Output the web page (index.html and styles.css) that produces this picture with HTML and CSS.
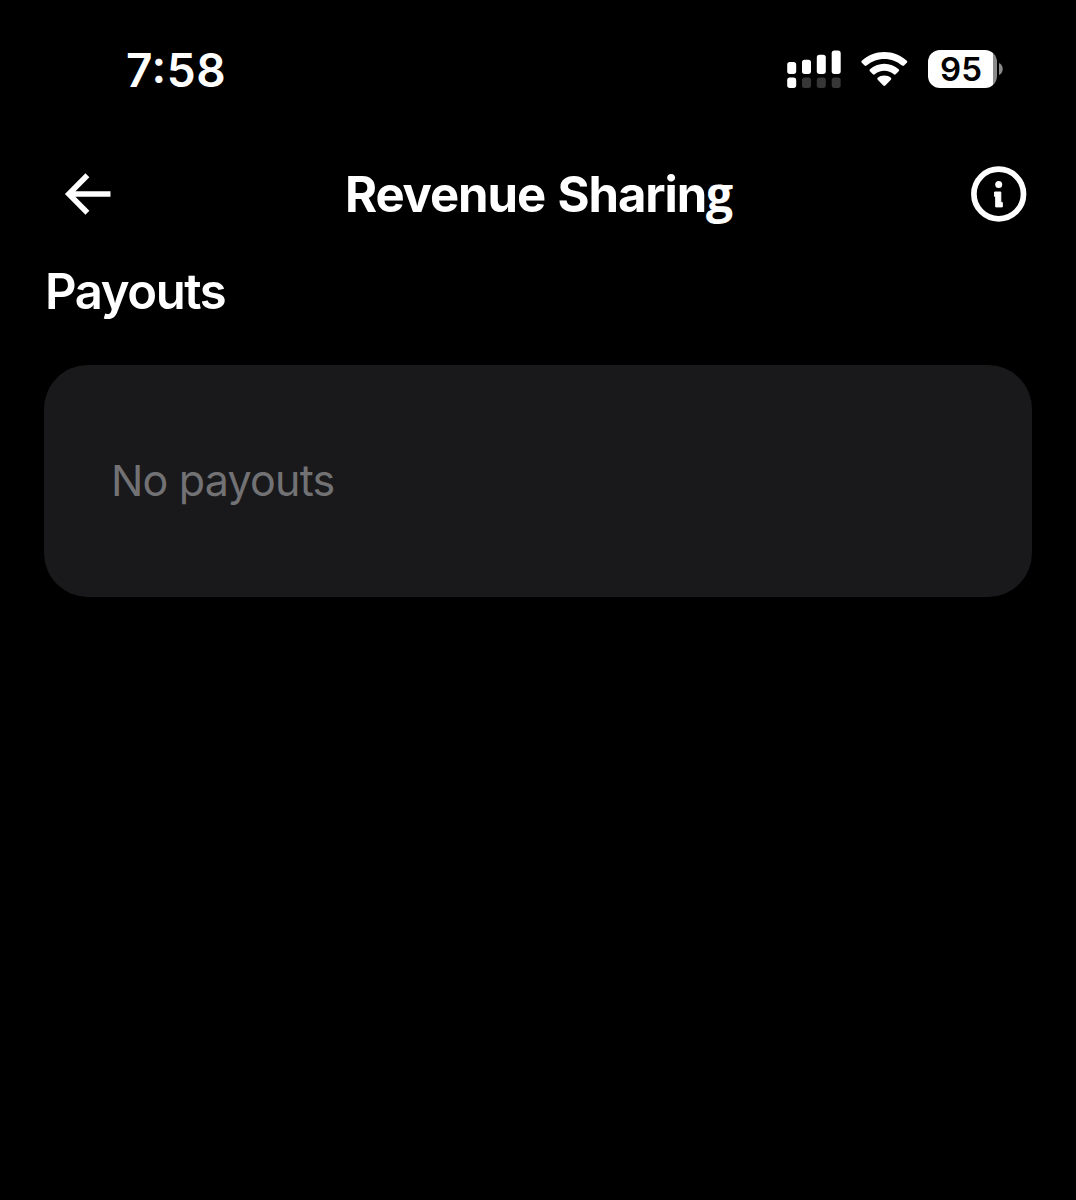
FILE: index.html
```html
<!DOCTYPE html>
<html lang="en">
  <head>
    <meta charset="UTF-8" />
    <meta name="viewport" content="width=device-width, initial-scale=1.0" />
    <title>Revenue Sharing</title>
    <link rel="stylesheet" href="styles.css">
  </head>
  <body>
    <div class="status-bar">
      <span class="time">7<span class="colon">:</span>58</span>
      <div class="status-icons">
        <svg class="signal" width="55" height="38" viewBox="0 0 55 38" fill="#fff">
          <rect x="0.2" y="12" width="9" height="12" rx="2.7" />
          <rect x="15" y="9.8" width="9" height="14.2" rx="2.7" />
          <rect x="29.8" y="4.8" width="9" height="19.2" rx="2.7" />
          <rect x="44.7" y="0.5" width="9" height="23.5" rx="2.7" />
          <rect x="0.2" y="27.5" width="9" height="10.5" rx="2.7" />
          <g fill="#363636">
            <rect x="15" y="27.5" width="9" height="10.5" rx="2.7" />
            <rect x="29.8" y="27.5" width="9" height="10.5" rx="2.7" />
            <rect x="44.7" y="27.5" width="9" height="10.5" rx="2.7" />
          </g>
        </svg>
        <svg class="wifi" width="47" height="38" viewBox="0 0 47 38" fill="#fff">
          <path d="M23.3 2C14.7 2 7 5.3 0.8 10.8Q-.2 11.8 0.8 12.8L3.6 15.6Q4.5 16.5 5.5 15.6C10.4 11.2 16.5 8.9 23.3 8.9S36.2 11.2 41.1 15.6Q42.1 16.5 43 15.6L45.8 12.8Q46.8 11.8 45.8 10.8C39.6 5.3 31.9 2 23.3 2Z" />
          <path d="M23.3 13.8C17.7 13.8 12.8 15.9 8.9 19.3Q7.9 20.3 8.9 21.3L11.9 24.3Q12.8 25.2 13.8 24.3C16.4 22 19.7 20.7 23.3 20.7S30.2 22 32.8 24.3Q33.8 25.2 34.7 24.3L37.7 21.3Q38.7 20.3 37.7 19.3C33.8 15.9 28.9 13.8 23.3 13.8Z" />
          <path d="M23.3 25.4C20.7 25.4 18.5 26.3 16.7 27.7Q15.7 28.7 16.7 29.7L22.3 35.6Q23.3 36.5 24.3 35.6L29.9 29.7Q30.9 28.7 29.9 27.7C28.1 26.3 25.9 25.4 23.3 25.4Z" />
        </svg>
        <div class="battery">
          <span class="battery-level">95</span>
        </div>
        <svg class="battery-cap" width="4" height="12" viewBox="0 0 4 12">
          <path d="M0 0C5 2 5 10 0 12Z" fill="#8a8a8a" />
        </svg>
      </div>
    </div>

    <header class="header">
      <svg class="back" width="48" height="42" viewBox="0 0 48 42" fill="none" stroke="#fff" stroke-width="5.5">
        <path d="M23.4 2.2L4.8 21L23.4 39.8M4.8 21H46.5" />
      </svg>
      <h1>Revenue Sharin<span class="tail">g</span></h1>
      <svg class="info" width="56" height="56" viewBox="0 0 56 56">
        <circle cx="27.7" cy="28" r="24.8" fill="none" stroke="#fff" stroke-width="5.7" />
        <circle cx="27.7" cy="18.6" r="3.5" fill="#fff" />
        <path d="M23.6 26H29.8V36.4H31.3V40.9H24.7V30.4H23.6Z" fill="#fff" stroke="#fff" stroke-width="1" stroke-linejoin="round" />
      </svg>
    </header>

    <main>
      <h2>Payouts</h2>
      <div class="card">
        <p>No payouts</p>
      </div>
    </main>
  </body>
</html>
```

FILE: styles.css
```css
body {
  font-family: Inter, "Liberation Sans", sans-serif;
  background-color: #000;
  color: #fff;
  margin: 0;
  min-height: 1200px;
}
svg {
  display: block;
  flex-shrink: 0;
}
.status-bar {
  display: flex;
  justify-content: space-between;
  align-items: center;
  height: 139px;
  padding: 0 73px 0 126px;
  box-sizing: border-box;
}
.time {
  padding-top: 2px;
  font-size: 46px;
  font-weight: 600;
  line-height: 57px;
  letter-spacing: 0.6px;
}
.colon {
  position: relative;
  top: -4px;
}
.status-icons {
  display: flex;
  align-items: center;
  padding-bottom: 1px;
}
.wifi {
  margin: 0 20px 0 19px;
}
.battery {
  width: 69px;
  height: 38px;
  border-radius: 12px;
  background: linear-gradient(to right, #fff 65px, #8a8a8a 65px);
  color: #000;
  display: flex;
  align-items: center;
}
.battery-level {
  width: 66px;
  font-size: 33px;
  font-weight: 600;
  line-height: 38px;
  text-align: center;
}
.battery-cap {
  margin-left: 2px;
}
.header {
  display: flex;
  justify-content: space-between;
  align-items: center;
  height: 109px;
  padding: 0 49px 0 64px;
}
h1 {
  margin: 0;
  padding: 2px 6px 0 0;
  font-size: 49px;
  font-weight: 700;
  line-height: 60px;
  letter-spacing: -1.1px;
  word-spacing: 2px;
  white-space: nowrap;
}
/* two-storey g */
.tail {
  font-family: "Open Sans", sans-serif;
  font-size: 48px;
  line-height: 1;
}
main {
  padding: 14px 44px 0;
}
h2 {
  margin: 0 0 43px 1px;
  font-size: 49px;
  font-weight: 600;
  line-height: 60px;
  letter-spacing: -1.4px;
}
.card {
  display: flex;
  align-items: center;
  height: 232px;
  padding: 0 67px;
  border-radius: 44px;
  background-color: #19191b;
}
.card p {
  margin: 0;
  padding-bottom: 2px;
  font-size: 43px;
  line-height: 52px;
  letter-spacing: -0.8px;
  color: #727275;
}
```
